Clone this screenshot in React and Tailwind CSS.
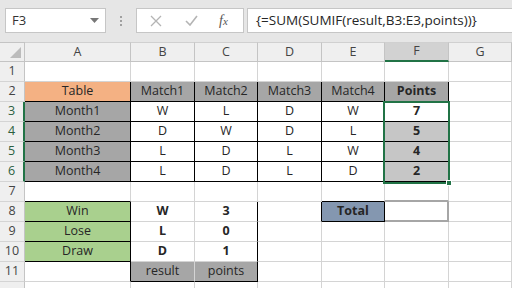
import React from 'react';

// one row = 7 cells (A..G); each cell: text, bg, bold, r (black right), b (black bottom)
const E = {};
const rows = [
  [E, E, E, E, E, E, E],
  [
    { t: 'Table', bg: 'bg-[#f4b183]', r: 1, b: 1 },
    { t: 'Match1', bg: 'bg-[#a6a6a6]', r: 1, b: 1 },
    { t: 'Match2', bg: 'bg-[#a6a6a6]', r: 1, b: 1 },
    { t: 'Match3', bg: 'bg-[#a6a6a6]', r: 1, b: 1 },
    { t: 'Match4', bg: 'bg-[#a6a6a6]', r: 1, b: 1 },
    { t: 'Points', bg: 'bg-[#a6a6a6]', bold: 1, r: 1, b: 1 },
    E,
  ],
  ...[
    ['Month1', 'W', 'L', 'D', 'W', '7'],
    ['Month2', 'D', 'W', 'D', 'L', '5'],
    ['Month3', 'L', 'D', 'L', 'W', '4'],
    ['Month4', 'L', 'D', 'L', 'D', '2'],
  ].map((r, i) => [
    { t: r[0], bg: 'bg-[#a6a6a6]', r: 1, b: 1 },
    { t: r[1], r: 1, b: 1 },
    { t: r[2], r: 1, b: 1 },
    { t: r[3], r: 1, b: 1 },
    { t: r[4], r: 1, b: 1 },
    { t: r[5], bold: 1, r: 1, b: 1, bg: i === 0 ? '' : 'bg-[#c6c6c6]' },
    E,
  ]),
  [{ b: 1 }, E, E, E, { b: 1 }, { gb: 1 }, E],
  [
    { t: 'Win', bg: 'bg-[#a9d08e]', r: 1, b: 1 },
    { t: 'W', bold: 1 },
    { t: '3', bold: 1, r: 1 },
    { r: 1 },
    { t: 'Total', bg: 'bg-[#8497b0]', bold: 1, r: 1, b: 1 },
    { gr: 1, gb: 1 },
    E,
  ],
  [
    { t: 'Lose', bg: 'bg-[#a9d08e]', r: 1, b: 1 },
    { t: 'L', bold: 1 },
    { t: '0', bold: 1, r: 1 },
    E, E, E, E,
  ],
  [
    { t: 'Draw', bg: 'bg-[#a9d08e]', r: 1, b: 1 },
    { t: 'D', bold: 1 },
    { t: '1', bold: 1, r: 1 },
    E, E, E, E,
  ],
  [
    { r: 1 },
    { t: 'result', bg: 'bg-[#a6a6a6]', b: 1 },
    { t: 'points', bg: 'bg-[#a6a6a6]', r: 1, b: 1 },
    E, E, E, E,
  ],
  [E, E, E, E, E, E, E],
];

const Cell = ({ c }) => {
  const right = c.r ? 'border-r-black' : c.gr ? 'border-r-2 border-r-[#a6a6a6]' : 'border-r-[#d4d4d4]';
  const bottom = c.b ? 'border-b-black' : c.gb ? 'border-b-2 border-b-[#a6a6a6]' : 'border-b-[#d4d4d4]';
  return (
    <div
      className={`flex items-center justify-center overflow-hidden whitespace-nowrap border-r border-b text-[12.5px] text-[#262626] ${right} ${bottom} ${c.bg || 'bg-white'} ${c.bold ? 'font-bold' : ''}`}
    >
      {c.t}
    </div>
  );
};

const RowHead = ({ n }) => {
  const sel = n >= 3 && n <= 6;
  return (
    <div
      className={`flex items-center justify-center border-b border-b-[#d4d4d4] bg-[#efefef] text-[12.5px] ${sel ? 'border-r-2 border-r-[#217346] text-[#2c5f3f]' : 'border-r border-r-[#c4c4c4] text-[#444]'}`}
    >
      {n < 12 ? n : ''}
    </div>
  );
};

export default function App() {
  const cols = ['A', 'B', 'C', 'D', 'E', 'F', 'G'];
  return (
    <div className="h-[288px] w-[512px] overflow-hidden bg-white" style={{ fontFamily: '"Open Sans", "Liberation Sans", sans-serif' }}>
      {/* formula bar */}
      <div className="flex h-[42px] items-start bg-[#e6e6e6] pt-[8px]">
        <div className="ml-[5px] flex h-[25px] w-[101px] items-center justify-between border border-[#c6c6c6] bg-white pl-[6px] pr-[6px] text-[13px] text-[#333]">
          <span>F3</span>
          <svg width="9" height="5" viewBox="0 0 9 5"><path d="M0 0 H9 L4.5 5 Z" fill="#777" /></svg>
        </div>
        <div className="flex w-[30px] flex-col items-center gap-[2px] pt-[8px]">
          <span className="h-[2px] w-[2px] bg-[#a0a0a0]" />
          <span className="h-[2px] w-[2px] bg-[#a0a0a0]" />
          <span className="h-[2px] w-[2px] bg-[#a0a0a0]" />
        </div>
        <div className="flex h-[25px] w-[108px] items-center border border-[#c6c6c6] bg-white">
          <svg className="ml-[13px]" width="12" height="12" viewBox="0 0 12 12">
            <path d="M1 1 L11 11 M11 1 L1 11" stroke="#b4b4b4" strokeWidth="1.3" />
          </svg>
          <svg className="ml-[23px]" width="13" height="11" viewBox="0 0 13 11">
            <path d="M1 6 L5 10 L12 1" stroke="#b4b4b4" strokeWidth="1.6" fill="none" />
          </svg>
          <span className="ml-[21px] text-[14px] italic text-[#555]" style={{ fontFamily: '"Liberation Serif", serif' }}>
            f<span className="text-[11px]">x</span>
          </span>
        </div>
        <div className="ml-[3px] flex h-[25px] flex-1 items-center border border-r-0 border-[#c6c6c6] bg-white pl-[8px] text-[13.5px] text-[#262626]">
          {'{=SUM(SUMIF(result,B3:E3,points))}'}
        </div>
      </div>

      {/* sheet */}
      <div className="relative grid grid-cols-[25px_106px_64px_63px_64px_63px_64px_63px] auto-rows-[20px]">
        <div className="relative border-r border-b border-t border-[#c4c4c4] bg-[#efefef]">
          <svg className="absolute bottom-[3px] right-[3px]" width="11" height="11" viewBox="0 0 11 11">
            <path d="M11 0 V11 H0 Z" fill="#bcbcbc" />
          </svg>
        </div>
        {cols.map((c) => (
          <div
            key={c}
            className={`flex items-center justify-center border-t border-t-[#d0d0d0] border-r border-r-[#c4c4c4] text-[12.5px] text-[#444] ${c === 'F' ? 'border-b-2 border-b-[#217346] bg-[#d2d2d2]' : 'border-b border-b-[#c4c4c4] bg-[#efefef]'}`}
          >
            {c}
          </div>
        ))}
        {rows.map((row, i) => (
          <React.Fragment key={i}>
            <RowHead n={i + 1} />
            {row.map((c, j) => (
              <Cell key={j} c={c} />
            ))}
          </React.Fragment>
        ))}

        {/* selection F3:F6 */}
        <div className="pointer-events-none absolute left-[383px] top-[59px] h-[83px] w-[67px] border-2 border-[#217346]" />
        <div className="pointer-events-none absolute left-[446px] top-[138px] h-[6px] w-[6px] border border-white bg-[#217346]" />
      </div>
    </div>
  );
}
